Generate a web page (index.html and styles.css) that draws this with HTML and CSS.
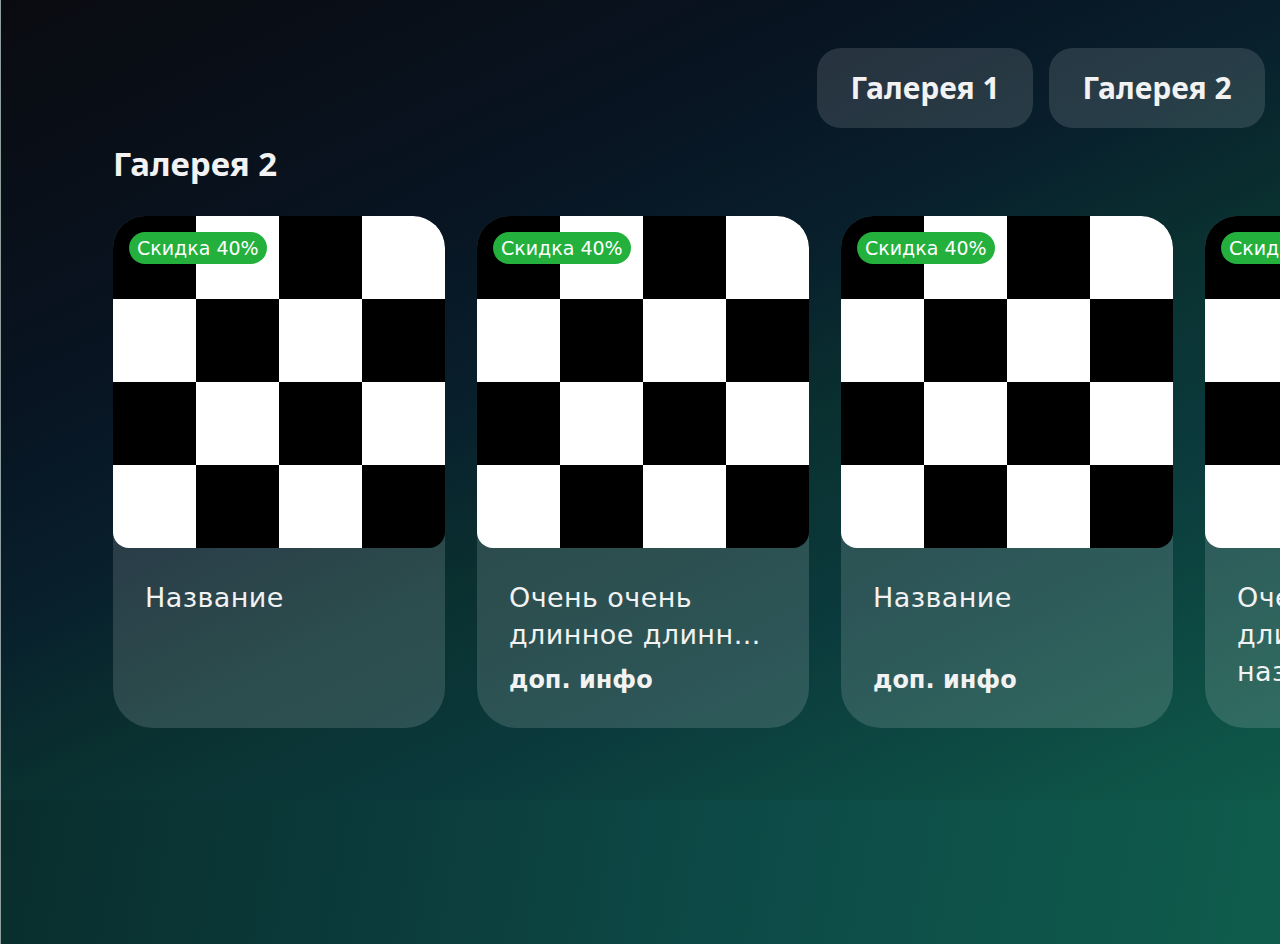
FILE: index.html
```html
<!DOCTYPE html>
<html lang="ru">
<head>
<meta charset="utf-8">
<title>Галерея</title>
<link rel="stylesheet" href="styles.css">
</head>
<body>
<div class="app">
  <nav class="tabs">
    <button class="tab">Галерея 1</button>
    <button class="tab">Галерея 2</button>
  </nav>
  <h2 class="section-title">Галерея 2</h2>
  <div class="row">
    <div class="card">
      <div class="pic"><span class="badge">Скидка 40%</span></div>
      <div class="info">
        <div class="name">Название</div>
      </div>
    </div>
    <div class="card">
      <div class="pic"><span class="badge">Скидка 40%</span></div>
      <div class="info">
        <div class="name">Очень очень длинное длинное название</div>
        <div class="extra">доп. инфо</div>
      </div>
    </div>
    <div class="card">
      <div class="pic"><span class="badge">Скидка 40%</span></div>
      <div class="info">
        <div class="name">Название</div>
        <div class="extra">доп. инфо</div>
      </div>
    </div>
    <div class="card">
      <div class="pic"><span class="badge">Скидка 40%</span></div>
      <div class="info">
        <div class="name name-long">Очень очень длинное длинное название</div>
      </div>
    </div>
  </div>
</div>
</body>
</html>
```
FILE: styles.css
```css
html, body {
  margin: 0;
  padding: 0;
}
body {
  min-height: 944px;
  box-sizing: border-box;
  border-left: 1px solid rgba(255,255,255,0.55);
  background: linear-gradient(100deg, #092828 0%, #0b3a3a 35%, #0d4c48 65%, #0f5c4c 100%);
  font-family: "DejaVu Sans", sans-serif;
  color: #f2f2f2;
}
.app {
  height: 800px;
  overflow: hidden;
  box-sizing: border-box;
  padding: 48px 0 0 112px;
  background: linear-gradient(155deg, #0a0b10 0%, #081422 30%, #08202c 45%, #0a3030 57%, #0b3a3c 72%, #0f5a4a 100%);
}
.tabs {
  display: flex;
  justify-content: flex-end;
  gap: 16px;
  padding-right: 15px;
}
.tab {
  width: 216px;
  height: 80px;
  border: 0;
  border-radius: 24px;
  background: rgba(255,255,255,0.13);
  color: #f2f2f2;
  font-family: "Noto Sans", sans-serif;
  font-weight: 700;
  font-size: 30px;
  line-height: 40px;
  padding: 0;
}
.section-title {
  margin: 18px 0 0;
  font-family: "Noto Sans", sans-serif;
  font-weight: 700;
  font-size: 33px;
  line-height: 36px;
  color: #f2f2f2;
}
.row {
  display: flex;
  gap: 32px;
  margin-top: 34px;
}
.card {
  flex: 0 0 332px;
  height: 512px;
  border-radius: 32px 32px 40px 40px;
  background: rgba(255,255,255,0.14);
  overflow: hidden;
}
.pic {
  position: relative;
  height: 332px;
  border-radius: 32px 32px 16px 16px;
  background: repeating-conic-gradient(#fff 0 25%, #000 0 50%) 0 0 / 166px 166px;
}
.badge {
  position: absolute;
  left: 16px;
  top: 16px;
  height: 32px;
  line-height: 32px;
  padding: 0 8px;
  border-radius: 16px;
  background: #23b03d;
  color: #fff;
  font-size: 19px;
}
.info {
  padding: 31px 32px 0;
}
.name {
  font-size: 27px;
  line-height: 37px;
  height: 74px;
  letter-spacing: 0.4px;
  display: -webkit-box;
  -webkit-box-orient: vertical;
  -webkit-line-clamp: 2;
  overflow: hidden;
}
.name-long {
  height: 111px;
  -webkit-line-clamp: 3;
}
.extra {
  margin-top: 11px;
  font-weight: 700;
  font-size: 24px;
  line-height: 32px;
}
```
